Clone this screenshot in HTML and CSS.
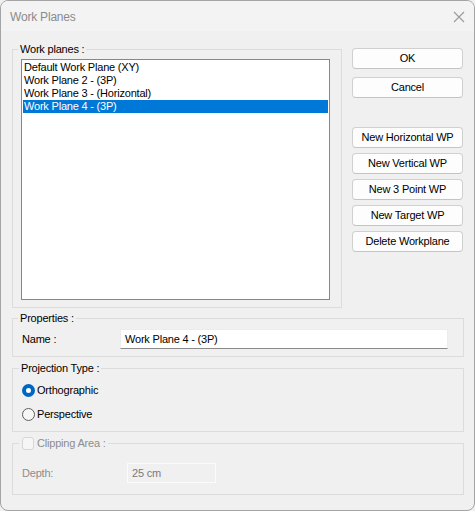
FILE: index.html
```html
<!DOCTYPE html>
<html>
<head>
<meta charset="utf-8">
<link rel="stylesheet" href="styles.css">
</head>
<body>
<div class="window">
  <div class="titlebar">
    <span class="title">Work Planes</span>
    <svg class="close" width="12" height="12" viewBox="0 0 12 12"><path d="M1 1 L11 11 M11 1 L1 11" stroke="#9a9a9a" stroke-width="1.1" fill="none"/></svg>
  </div>
  <div class="content">
    <div class="toprow">
      <fieldset class="group planes">
        <legend>Work planes :</legend>
        <div class="listbox">
          <div class="item">Default Work Plane (XY)</div>
          <div class="item">Work Plane 2 - (3P)</div>
          <div class="item">Work Plane 3 - (Horizontal)</div>
          <div class="item selected">Work Plane 4 - (3P)</div>
        </div>
      </fieldset>
      <div class="buttons">
        <button class="btn">OK</button>
        <button class="btn">Cancel</button>
        <div class="btn-stack">
          <button class="btn">New Horizontal WP</button>
          <button class="btn">New Vertical WP</button>
          <button class="btn">New 3 Point WP</button>
          <button class="btn">New Target WP</button>
          <button class="btn">Delete Workplane</button>
        </div>
      </div>
    </div>

    <fieldset class="group props">
      <legend>Properties :</legend>
      <div class="field-row">
        <span class="field-label name-label">Name :</span>
        <div class="textbox name-box">Work Plane 4 - (3P)</div>
      </div>
    </fieldset>

    <fieldset class="group proj">
      <legend>Projection Type :</legend>
      <div class="radio-row">
        <span class="radio checked"></span><span class="radio-text">Orthographic</span>
      </div>
      <div class="radio-row">
        <span class="radio"></span><span class="radio-text">Perspective</span>
      </div>
    </fieldset>

    <fieldset class="group clip">
      <legend class="check-legend"><span class="checkbox"></span><span class="disabled-text">Clipping Area :</span></legend>
      <div class="field-row">
        <span class="field-label depth-label disabled-text">Depth:</span>
        <div class="textbox depth-box">25 cm</div>
      </div>
    </fieldset>
  </div>
</div>
</body>
</html>
```
FILE: styles.css
```css
html, body {
  margin: 0;
  padding: 0;
  background: #f0f0f0;
}
body {
  width: 475px;
  height: 511px;
  overflow: hidden;
  font-family: "Liberation Sans", Arial, sans-serif;
  font-size: 11px;
  letter-spacing: -0.2px;
  color: #000;
}
.window {
  box-sizing: border-box;
  width: 475px;
  height: 511px;
  border: 1px solid #a4a4a4;
  border-radius: 8px;
  background: #f0f0f0;
  overflow: hidden;
}
.titlebar {
  height: 30px;
  background: #f3f3f3;
  display: flex;
  align-items: center;
  justify-content: space-between;
  padding: 0 9px 0 9px;
}
.title {
  font-size: 12px;
  letter-spacing: -0.2px;
  color: #8b8b8b;
  padding-top: 1px;
}
.close {
  margin-top: 1px;
}
.content {
  padding: 12px 0 0 11px;
}
.toprow {
  display: flex;
  align-items: flex-start;
}
.group {
  margin: 0;
  border: 1px solid #dcdcdc;
  min-width: 0;
}
.group legend {
  padding: 0 2px;
  margin-left: -3px;
  line-height: 13px;
  height: 13px;
}
.planes {
  box-sizing: border-box;
  width: 330px;
  padding: 3px 11px 7px 8px;
}
.listbox {
  box-sizing: border-box;
  width: 309px;
  height: 241px;
  border: 1px solid #828790;
  background: #fff;
  padding: 1px;
}
.item {
  height: 13px;
  line-height: 13px;
  padding-left: 1px;
  white-space: nowrap;
}
.item.selected {
  background: #0078d7;
  color: #fff;
}
.buttons {
  margin-left: 10px;
  margin-top: 5px;
  display: flex;
  flex-direction: column;
  gap: 8px;
}
.btn-stack {
  margin-top: 21px;
  display: flex;
  flex-direction: column;
  gap: 5px;
}
.btn {
  box-sizing: border-box;
  width: 111px;
  height: 21px;
  padding: 0;
  font-family: inherit;
  font-size: 11px;
  letter-spacing: -0.2px;
  color: #000;
  background: #fdfdfd;
  border: 1px solid #d0d0d0;
  border-bottom-color: #c4c4c4;
  border-radius: 4px;
  text-align: center;
  line-height: 19px;
}
.props {
  box-sizing: border-box;
  width: 452px;
  margin-top: 4px;
  padding: 4px 0 7px 8px;
}
.field-row {
  display: flex;
  align-items: center;
}
.field-label {
  display: block;
}
.name-label {
  width: 99px;
  padding-left: 1px;
  box-sizing: border-box;
}
.textbox {
  box-sizing: border-box;
  height: 20px;
  line-height: 18px;
  padding-left: 4px;
  white-space: nowrap;
}
.name-box {
  width: 328px;
  background: #fff;
  border: 1px solid #ececec;
  border-bottom-color: #8a8a8a;
}
.proj {
  box-sizing: border-box;
  width: 452px;
  margin-top: 5px;
  padding: 3px 0 5px 9px;
}
.radio-row {
  height: 24px;
  display: flex;
  align-items: center;
}
.radio {
  box-sizing: border-box;
  width: 13px;
  height: 13px;
  border-radius: 50%;
  border: 1px solid #5e5e5e;
  background: #f7f7f7;
  margin-right: 2px;
}
.radio.checked {
  border: 4px solid #0067c0;
  background: #fff;
}
.clip {
  box-sizing: border-box;
  width: 452px;
  margin-top: 5px;
  padding: 13px 0 11px 9px;
}
.check-legend {
  display: flex;
  align-items: center;
}
.checkbox {
  box-sizing: border-box;
  width: 12px;
  height: 13px;
  border: 1px solid #d6d6d6;
  border-radius: 3px;
  background: #f6f6f6;
  margin-right: 3px;
  margin-left: 1px;
}
.disabled-text {
  color: #8d8d8d;
}
.depth-label {
  width: 105px;
  box-sizing: border-box;
}
.depth-box {
  width: 89px;
  background: #f0f0f0;
  border: 1px solid #fbfbfb;
  color: #7a7a7a;
}
```
